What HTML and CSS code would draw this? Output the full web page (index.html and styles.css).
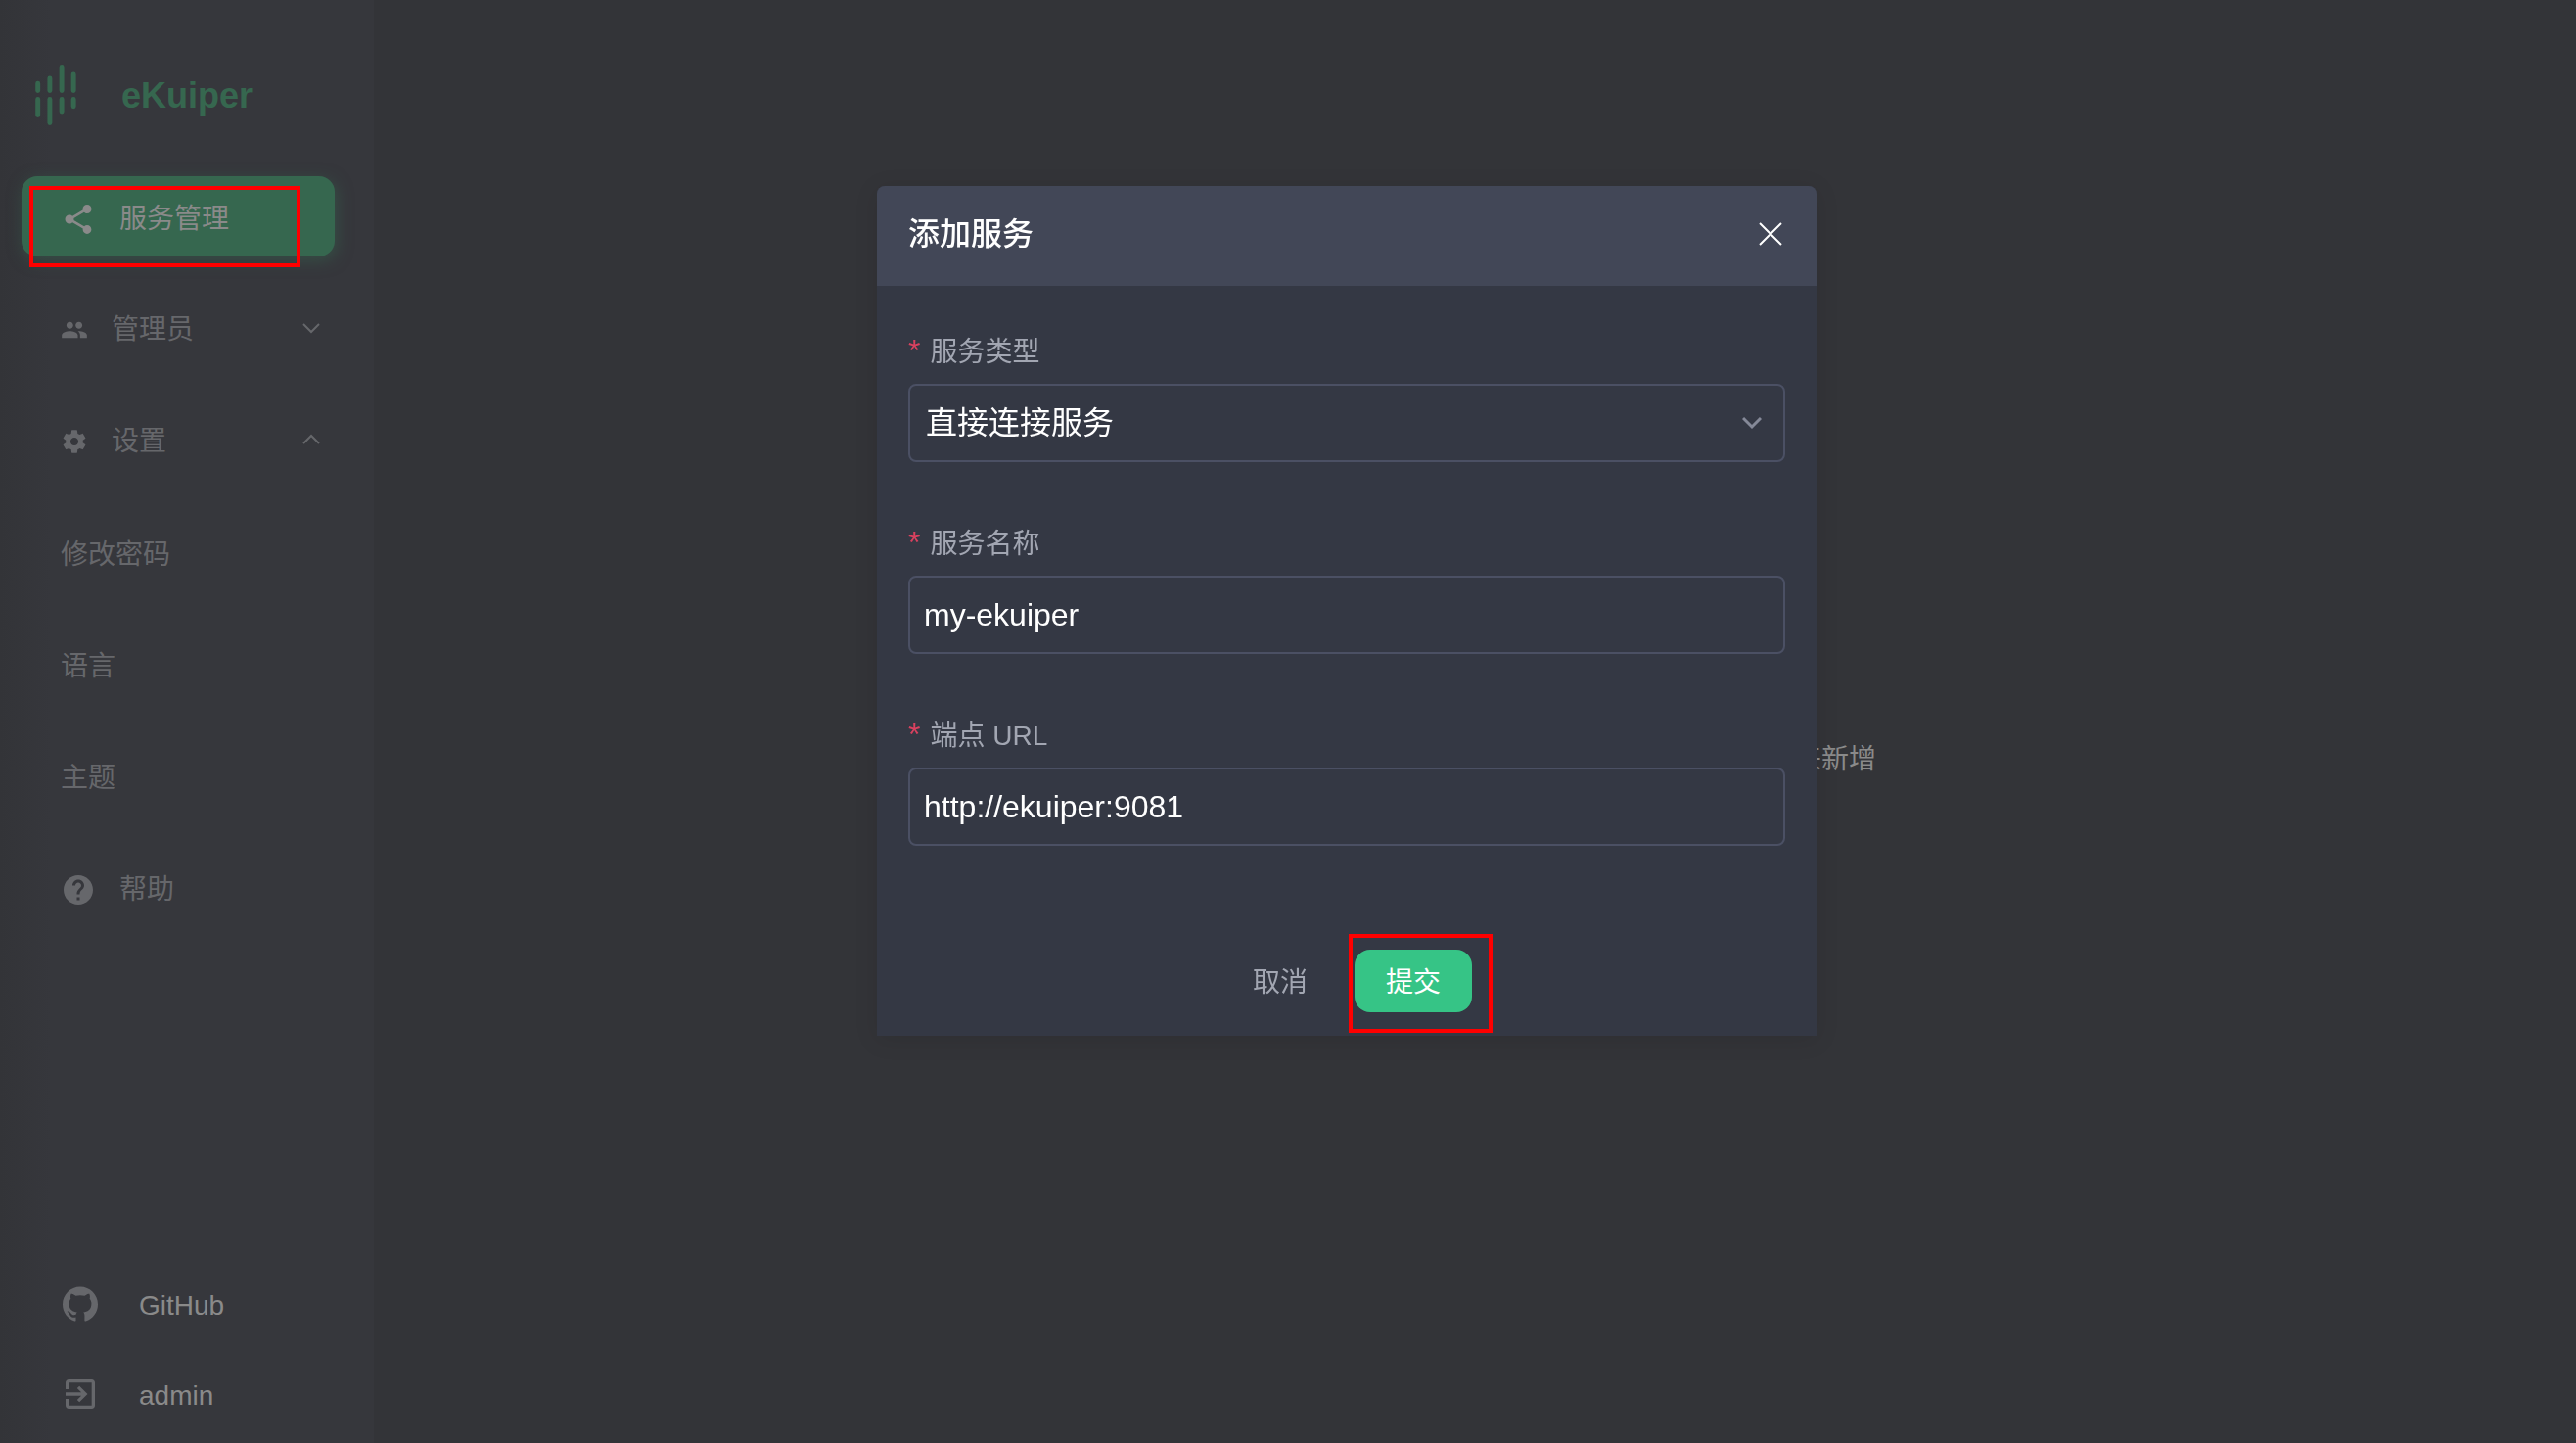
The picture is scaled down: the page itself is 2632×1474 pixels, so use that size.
FILE: index.html
```
<!DOCTYPE html>
<html lang="zh-CN">
<head>
    <meta charset="UTF-8">
    <meta name="viewport" content="width=device-width, initial-scale=1.0">
    <title>eKuiper</title>
    <link rel="stylesheet" href="styles.css">
</head>
<body>
    <!-- 左侧菜单 -->
    <aside class="sidebar">
        <a class="brand" href="#">
            <svg class="brand-logo" viewBox="108 107 126 188">
                <g fill="none" stroke="currentColor" stroke-width="15" stroke-linecap="round">
                    <path d="M115.500 165.500V187.500M115.500 214.500V263.500"/>
                    <path d="M152.500 149.500V187.500M152.500 214.500V287.500"/>
                    <path d="M189.500 114.500V187.500M189.500 214.500V252.500"/>
                    <path d="M226 137.500V187.500M226 214.500V236.500"/>
                </g>
            </svg>
            <span>eKuiper</span>
        </a>

        <nav>
            <ul class="menu">
                <li>
                    <a class="menu-item active" href="#">
                        <svg class="icon-lg" viewBox="0 0 24 24"><path d="M18 16.080c-.76 0-1.440.3-1.960.77L8.910 12.700c.05-.23.09-.46.09-.7s-.04-.47-.09-.7l7.050-4.110c.54.5 1.250.81 2.040.81 1.660 0 3-1.340 3-3s-1.340-3-3-3-3 1.340-3 3c0 .24.04.47.09.7L8.040 9.810C7.500 9.310 6.790 9 6 9c-1.660 0-3 1.340-3 3s1.340 3 3 3c.79 0 1.500-.31 2.040-.81l7.120 4.160c-.05.21-.08.43-.08.65 0 1.610 1.310 2.920 2.920 2.920s2.920-1.310 2.920-2.920-1.310-2.920-2.920-2.920z"/></svg>
                        <span>服务管理</span>
                        <i class="mark mark-menu"></i>
                    </a>
                </li>
                <li>
                    <a class="menu-item" href="#">
                        <svg class="icon-sm" viewBox="0 0 24 24"><path d="M16 11c1.660 0 2.990-1.340 2.990-3S17.660 5 16 5c-1.660 0-3 1.340-3 3s1.340 3 3 3zm-8 0c1.660 0 2.990-1.340 2.990-3S9.660 5 8 5C6.340 5 5 6.340 5 8s1.340 3 3 3zm0 2c-2.330 0-7 1.170-7 3.500V19h14v-2.500c0-2.330-4.670-3.500-7-3.500zm8 0c-.29 0-.62.02-.97.05 1.160.84 1.970 1.970 1.970 3.450V19h6v-2.500c0-2.330-4.670-3.500-7-3.500z"/></svg>
                        <span>管理员</span>
                        <svg class="arrow" viewBox="0 0 18 12"><path d="M1 2l8 8 8-8"/></svg>
                    </a>
                </li>
                <li>
                    <a class="menu-item" href="#">
                        <svg class="icon-sm" viewBox="0 0 24 24"><path d="M19.430 12.980c.04-.32.07-.64.07-.98s-.03-.66-.07-.98l2.110-1.650c.19-.15.24-.42.12-.64l-2-3.460c-.12-.22-.39-.3-.61-.22l-2.490 1c-.52-.4-1.080-.73-1.690-.98l-.38-2.650C14.460 2.180 14.250 2 14 2h-4c-.25 0-.46.18-.49.42l-.38 2.650c-.61.25-1.170.59-1.690.98l-2.490-1c-.23-.09-.49 0-.61.22l-2 3.460c-.13.22-.07.49.12.64l2.110 1.650c-.04.32-.07.65-.07.98s.03.66.07.98l-2.110 1.650c-.19.15-.24.42-.12.64l2 3.460c.12.22.39.3.61.22l2.490-1c.52.4 1.080.73 1.690.98l.38 2.650c.03.24.24.42.49.42h4c.25 0 .46-.18.49-.42l.38-2.650c.61-.25 1.170-.59 1.690-.98l2.490 1c.23.09.49 0 .61-.22l2-3.460c.12-.22.07-.49-.12-.64l-2.110-1.650zM12 15.500c-1.930 0-3.500-1.570-3.500-3.500s1.570-3.500 3.500-3.500 3.500 1.570 3.500 3.500-1.570 3.500-3.500 3.500z"/></svg>
                        <span>设置</span>
                        <svg class="arrow" viewBox="0 0 18 12"><path d="M1 10l8-8 8 8"/></svg>
                    </a>
                    <ul class="menu submenu">
                        <li><a class="menu-item" href="#">修改密码</a></li>
                        <li><a class="menu-item" href="#">语言</a></li>
                        <li><a class="menu-item" href="#">主题</a></li>
                    </ul>
                </li>
                <li>
                    <a class="menu-item" href="#">
                        <svg class="icon-lg" viewBox="0 0 24 24"><path d="M12 2C6.480 2 2 6.480 2 12s4.480 10 10 10 10-4.480 10-10S17.520 2 12 2zm1 17h-2v-2h2v2zm2.070-7.750l-.9.92C13.450 12.900 13 13.500 13 15h-2v-.5c0-1.100.45-2.100 1.170-2.830l1.240-1.260c.37-.36.59-.86.59-1.410 0-1.100-.9-2-2-2s-2 .9-2 2H8c0-2.210 1.790-4 4-4s4 1.790 4 4c0 .88-.36 1.680-.93 2.250z"/></svg>
                        <span>帮助</span>
                    </a>
                </li>
            </ul>
        </nav>

        <div class="sidebar-footer">
            <a class="footer-item" href="#">
                <svg class="icon-github" viewBox="0 0 24 24"><path d="M12 .297c-6.630 0-12 5.373-12 12 0 5.303 3.438 9.800 8.205 11.385.6.113.82-.258.82-.577 0-.285-.01-1.040-.015-2.040-3.338.724-4.042-1.610-4.042-1.610C4.422 18.070 3.633 17.700 3.633 17.700c-1.087-.744.084-.729.084-.729 1.205.084 1.838 1.236 1.838 1.236 1.070 1.835 2.809 1.305 3.495.998.108-.776.417-1.305.76-1.605-2.665-.3-5.466-1.332-5.466-5.930 0-1.310.465-2.380 1.235-3.220-.135-.303-.54-1.523.105-3.176 0 0 1.005-.322 3.300 1.230.96-.267 1.980-.399 3-.405 1.020.006 2.040.138 3 .405 2.280-1.552 3.285-1.230 3.285-1.230.645 1.653.24 2.873.12 3.176.765.84 1.230 1.910 1.230 3.220 0 4.610-2.805 5.625-5.475 5.920.42.36.81 1.096.81 2.220 0 1.606-.015 2.896-.015 3.286 0 .315.21.69.825.57C20.565 22.092 24 17.592 24 12.297c0-6.627-5.373-12-12-12"/></svg>
                <span>GitHub</span>
            </a>
            <a class="footer-item" href="#">
                <svg class="icon-exit" viewBox="0 0 24 24"><path d="M10.090 15.590L11.500 17l5-5-5-5-1.410 1.410L12.670 11H3v2h9.670l-2.580 2.590zM19 3H5c-1.110 0-2 .9-2 2v4h2V5h14v14H5v-4H3v4c0 1.100.89 2 2 2h14c1.100 0 2-.9 2-2V5c0-1.100-.9-2-2-2z"/></svg>
                <span>admin</span>
            </a>
        </div>
    </aside>

    <!-- 空列表提示 -->
    <main class="content">
        <p class="empty">当前还没有添加过任何服务,请点击页面右上角的添加服务项来新增</p>
    </main>

    <!-- 添加服务弹窗 -->
    <div class="overlay">
        <div class="dialog" role="dialog" aria-labelledby="dialog-title">
            <div class="dialog-header">
                <h2 id="dialog-title">添加服务</h2>
                <button class="close" type="button" aria-label="关闭">
                    <svg viewBox="0 0 24 24"><path d="M1 1l22 22M23 1L1 23"/></svg>
                </button>
            </div>
            <form class="dialog-body">
                <div class="field">
                    <label for="type"><span class="required">*</span>服务类型</label>
                    <div class="select-box">
                        <select id="type">
                            <option>直接连接服务</option>
                        </select>
                        <svg class="select-arrow" viewBox="0 0 20 14"><path d="M1 2l9 9 9-9"/></svg>
                    </div>
                </div>
                <div class="field">
                    <label for="name"><span class="required">*</span>服务名称</label>
                    <input id="name" type="text" value="my-ekuiper">
                </div>
                <div class="field">
                    <label for="url"><span class="required">*</span>端点 URL</label>
                    <input id="url" type="text" value="http://ekuiper:9081">
                </div>
                <div class="actions">
                    <button class="btn" type="button">取消</button>
                    <button class="btn btn-primary" type="button">提交<i class="mark mark-submit"></i></button>
                </div>
            </form>
        </div>
    </div>
</body>
</html>
```
FILE: styles.css
```
* {
    box-sizing: border-box;
}

body {
    margin: 0;
    min-height: 100vh;
    display: flex;
    background-color: #333438;
    color: #8a8a8a;
    font-family: "Liberation Sans", "Noto Sans CJK SC", sans-serif;
    font-size: 28px;
    line-height: 40px;
}

a {
    color: inherit;
    text-decoration: none;
}

svg {
    display: block;
    flex-shrink: 0;
    fill: currentColor;
}

/* 左侧菜单 */
.sidebar {
    width: 382px;
    flex-shrink: 0;
    display: flex;
    flex-direction: column;
    padding: 66px 40px 28px 22px;
    background: linear-gradient(to right, #333438, #36373c 52px);
}

.brand {
    display: flex;
    align-items: center;
    gap: 46px;
    height: 62px;
    margin-bottom: 52px;
    padding-left: 14px;
    color: #36674f;
    font-size: 36px;
    font-weight: bold;
}

.brand span {
    padding-top: 2px;
}

.brand-logo {
    width: 42px;
    height: 62px;
}

.menu {
    display: flex;
    flex-direction: column;
    gap: 32px;
    margin: 0;
    padding: 0;
    list-style: none;
}

.submenu {
    margin-top: 34px;
}

.menu-item {
    position: relative;
    display: flex;
    align-items: center;
    gap: 24px;
    height: 82px;
    padding: 4px 15px 0 40px;
    border-radius: 16px;
    color: #66676b;
}

.menu-item.active {
    padding-top: 6px;
    background-color: #36674f;
    color: #8a8a8a;
    box-shadow: 2px 4px 16px rgba(54, 103, 79, 0.5);
}

.icon-lg {
    width: 36px;
    height: 36px;
}

.icon-sm {
    width: 28px;
    height: 28px;
}

.arrow {
    width: 18px;
    height: 12px;
    margin: 0 0 4px auto;
    fill: none;
    stroke: currentColor;
    stroke-width: 2;
}

.sidebar-footer {
    display: flex;
    flex-direction: column;
    gap: 52px;
    margin-top: auto;
    padding-left: 40px;
}

.footer-item {
    display: flex;
    align-items: center;
    gap: 40px;
    height: 40px;
}

.footer-item svg {
    color: #66676b;
}

.icon-github {
    width: 36px;
    height: 36px;
    margin: 0 2px 4px;
}

.icon-exit {
    width: 40px;
    height: 40px;
    margin-bottom: 4px;
}

/* 内容区 */
.content {
    flex: 1;
    display: flex;
    align-items: center;
    justify-content: center;
    padding-top: 78px;
}

.empty {
    margin: 0;
}

/* 弹窗 */
.overlay {
    position: fixed;
    inset: 0;
    display: flex;
    align-items: flex-start;
    justify-content: center;
    padding: 190px 0 0 120px;
}

.dialog {
    width: 960px;
    border-radius: 8px 8px 0 0;
    background-color: #343844;
    box-shadow: 0 4px 24px rgba(0, 0, 0, 0.1);
}

.dialog-header {
    display: flex;
    align-items: center;
    justify-content: space-between;
    padding: 29px 32px 33px;
    border-radius: 8px 8px 0 0;
    background-color: #424757;
    color: #fff;
}

.dialog-header h2 {
    margin: 0;
    font-size: 32px;
    font-weight: 500;
}

.close {
    padding: 0 3px;
    border: none;
    background: none;
    color: #fff;
    cursor: pointer;
}

.close svg {
    width: 24px;
    height: 24px;
    stroke: currentColor;
    stroke-width: 2;
}

.dialog-body {
    padding: 46px 32px 24px;
}

.field {
    margin-bottom: 62px;
}

.field label {
    display: block;
    height: 40px;
    margin-bottom: 14px;
    color: #a2a6b2;
}

.required {
    margin-right: 10px;
    color: #d9415f;
    font-size: 32px;
}

.field input,
.field select {
    display: block;
    width: 100%;
    height: 80px;
    padding: 0 14px;
    border: 2px solid #4b5064;
    border-radius: 8px;
    outline: none;
    appearance: none;
    background: none;
    color: #fff;
    font-family: inherit;
    font-size: 32px;
}

.field select {
    padding: 0 16px;
}

.select-box {
    position: relative;
}

.select-arrow {
    position: absolute;
    top: 33px;
    right: 24px;
    width: 20px;
    height: 14px;
    fill: none;
    stroke: #858998;
    stroke-width: 3;
    pointer-events: none;
}

.actions {
    display: flex;
    justify-content: center;
    gap: 16px;
    padding-top: 44px;
}

.btn {
    position: relative;
    width: 120px;
    height: 64px;
    padding: 0 0 2px;
    border: none;
    border-radius: 16px;
    background: none;
    color: #a2a6b2;
    font-family: inherit;
    font-size: 28px;
    cursor: pointer;
}

.btn-primary {
    background-color: #36c486;
    color: #fff;
}

/* 红色标注框 */
.mark {
    position: absolute;
    border: 4px solid #f00;
    pointer-events: none;
}

.mark-menu {
    top: 10px;
    left: 8px;
    width: 277px;
    height: 83px;
}

.mark-submit {
    top: -16px;
    left: -6px;
    width: 147px;
    height: 101px;
}
```
